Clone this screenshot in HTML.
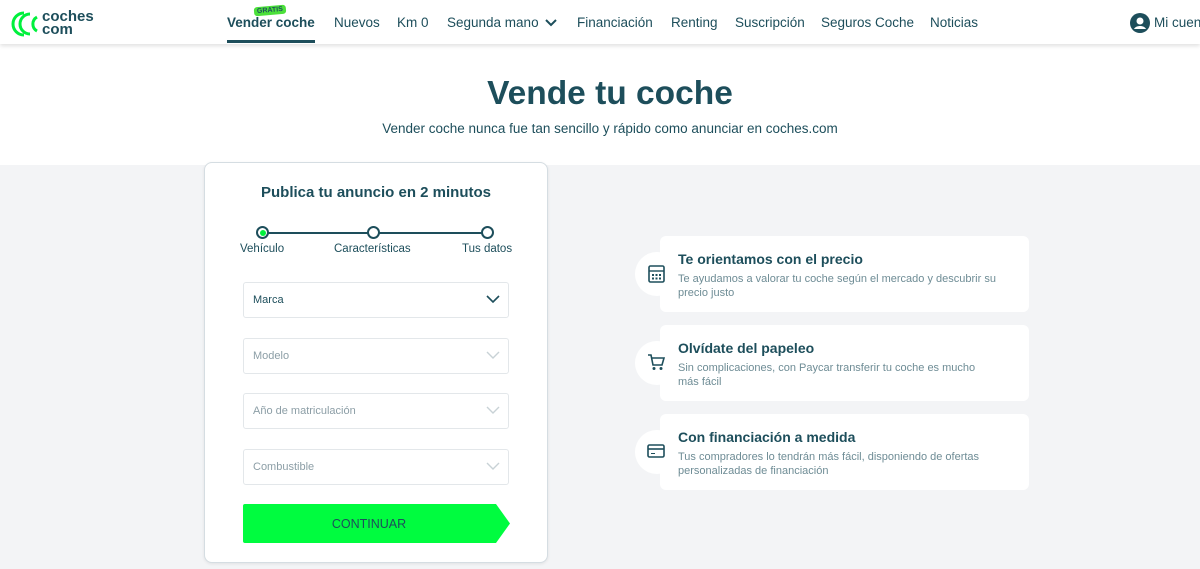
<!DOCTYPE html>
<html><head><meta charset="utf-8"><style>
*{margin:0;padding:0;box-sizing:border-box}
body{width:1200px;height:569px;overflow:hidden;font-family:"Liberation Sans",sans-serif;color:#1d4e5b;background:#f3f4f6;position:relative}
.hdr{position:absolute;left:0;top:0;width:1200px;height:44px;background:#fff;box-shadow:0 2px 4px rgba(0,0,0,.12);z-index:2}
.nav{position:absolute;top:15px;font-size:13.5px;color:#1d4e5b;white-space:nowrap}
.hero{position:absolute;left:0;top:44px;width:1200px;height:121px;background:#fff}
h1{position:absolute;top:75px;left:10px;width:1200px;text-align:center;font-size:33.5px;font-weight:bold;color:#1d4e5b}
.sub{position:absolute;top:121px;left:10px;width:1200px;text-align:center;font-size:13.5px;color:#1d4e5b}
.card{position:absolute;left:204px;top:162px;width:344px;height:401px;background:#fff;border:1px solid #d5dde2;border-radius:8px;box-shadow:0 1px 3px rgba(0,0,0,.08)}
.sel{position:absolute;left:38px;width:266px;height:36px;border:1px solid #e3e7ea;border-radius:3px;font-size:11px;padding:11px 9px;color:#8c9ea6}
.sel svg{position:absolute;right:8px;top:12px}
.f{position:absolute;left:660px;width:369px;height:76px;background:#fff;border-radius:6px}
.c{position:absolute;left:635px;width:44px;height:44px;border-radius:50%;background:#fff}
.f b{position:absolute;left:18px;top:15px;font-size:14px;color:#1d4e5b}
.f p{position:absolute;left:18px;top:36px;font-size:11px;color:#6e8c95;line-height:14px;width:320px}
</style></head><body>
<div class="hdr">
<svg style="position:absolute;left:10px;top:11px" width="30" height="26" viewBox="0 0 30 26"><path d="M14 2a11 11 0 1 0 0 22" fill="none" stroke="#00f03c" stroke-width="3"/><path d="M20 3a10 10 0 0 0 0 20" fill="none" stroke="#00f03c" stroke-width="3"/><path d="M27 6a8 8 0 0 0 0 14" fill="none" stroke="#00f03c" stroke-width="3"/></svg>
<div style="position:absolute;left:42px;top:10px;font-size:15px;font-weight:bold;line-height:13px;color:#1d4e5b">coches<br>com</div>
<div style="position:absolute;left:254px;top:6px;background:#4be03a;color:#1d4e5b;font-size:7px;font-weight:bold;padding:1px 3px;border-radius:3px;transform:rotate(-5deg)">GRATIS</div>
<div class="nav" style="left:227px;font-weight:bold">Vender coche</div>
<div style="position:absolute;left:227px;top:40px;width:88px;height:3px;background:#1d4e5b"></div>
<div class="nav" style="left:334px">Nuevos</div>
<div class="nav" style="left:397px">Km 0</div>
<div class="nav" style="left:447px">Segunda mano <svg width="12" height="8" viewBox="0 0 12 8" style="margin-left:3px"><path d="M1 1l5 5 5-5" fill="none" stroke="#1d4e5b" stroke-width="2"/></svg></div>
<div class="nav" style="left:577px">Financiación</div>
<div class="nav" style="left:671px">Renting</div>
<div class="nav" style="left:735px">Suscripción</div>
<div class="nav" style="left:821px">Seguros Coche</div>
<div class="nav" style="left:930px">Noticias</div>
<svg style="position:absolute;left:1130px;top:13px" width="20" height="20" viewBox="0 0 20 20"><circle cx="10" cy="10" r="10" fill="#1d4e5b"/><circle cx="10" cy="8" r="3.5" fill="#fff"/><path d="M4 16c2-4 10-4 12 0" fill="#fff"/></svg>
<div class="nav" style="left:1154px">Mi cuenta</div>
</div>
<div class="hero"></div>
<h1>Vende tu coche</h1>
<div class="sub">Vender coche nunca fue tan sencillo y rápido como anunciar en coches.com</div>
<div class="card">
<div style="position:absolute;top:21px;width:100%;text-align:center;font-size:15px;font-weight:bold">Publica tu anuncio en 2 minutos</div>
<div style="position:absolute;left:57px;top:69px;width:226px;height:2px;background:#1d4e5b"></div>
<div style="position:absolute;left:51px;top:63px;width:13px;height:13px;border-radius:50%;border:2px solid #1d4e5b;background:#fff"><div style="margin:1.5px;width:6px;height:6px;border-radius:50%;background:#00f03c"></div></div>
<div style="position:absolute;left:162px;top:63px;width:13px;height:13px;border-radius:50%;border:2px solid #1d4e5b;background:#fff"></div>
<div style="position:absolute;left:276px;top:63px;width:13px;height:13px;border-radius:50%;border:2px solid #1d4e5b;background:#fff"></div>
<div style="position:absolute;left:35px;top:80px;font-size:11.5px">Vehículo</div>
<div style="position:absolute;left:129px;top:80px;font-size:11.5px">Características</div>
<div style="position:absolute;left:257px;top:80px;font-size:11.5px">Tus datos</div>
<div class="sel" style="top:119px;color:#1d4e5b">Marca<svg width="14" height="9" viewBox="0 0 14 9"><path d="M1 1l6 6 6-6" fill="none" stroke="#1d4e5b" stroke-width="1.6"/></svg></div>
<div class="sel" style="top:175px">Modelo<svg width="14" height="9" viewBox="0 0 14 9"><path d="M1 1l6 6 6-6" fill="none" stroke="#c8d2d6" stroke-width="1.4"/></svg></div>
<div class="sel" style="top:230px">Año de matriculación<svg width="14" height="9" viewBox="0 0 14 9"><path d="M1 1l6 6 6-6" fill="none" stroke="#c8d2d6" stroke-width="1.4"/></svg></div>
<div class="sel" style="top:286px">Combustible<svg width="14" height="9" viewBox="0 0 14 9"><path d="M1 1l6 6 6-6" fill="none" stroke="#c8d2d6" stroke-width="1.4"/></svg></div>
<svg style="position:absolute;left:38px;top:341px" width="267" height="39" viewBox="0 0 267 39"><path d="M2 0H253L267 19.5L253 39H2Q0 39 0 37V2Q0 0 2 0Z" fill="#00fc3f"/><text x="126" y="24" text-anchor="middle" font-family="Liberation Sans" font-size="12.5" fill="#1d4e5b">CONTINUAR</text></svg>
</div>
<div class="c" style="top:252px"></div>
<div class="f" style="top:236px"><b>Te orientamos con el precio</b><p>Te ayudamos a valorar tu coche según el mercado y descubrir su precio justo</p></div>
<svg style="position:absolute;left:648px;top:265px" width="17" height="18" viewBox="0 0 17 18"><rect x="1" y="1" width="15" height="16" rx="1.5" fill="none" stroke="#1d4e5b" stroke-width="1.6"/><line x1="1" y1="6" x2="16" y2="6" stroke="#1d4e5b" stroke-width="1.4"/><rect x="4" y="9" width="2" height="2" fill="#1d4e5b"/><rect x="7.5" y="9" width="2" height="2" fill="#1d4e5b"/><rect x="11" y="9" width="2" height="2" fill="#1d4e5b"/><rect x="4" y="12.5" width="2" height="2" fill="#1d4e5b"/><rect x="7.5" y="12.5" width="2" height="2" fill="#1d4e5b"/><rect x="11" y="12.5" width="2" height="2" fill="#1d4e5b"/></svg>
<div class="c" style="top:341px"></div>
<div class="f" style="top:325px"><b>Olvídate del papeleo</b><p>Sin complicaciones, con Paycar transferir tu coche es mucho más fácil</p></div>
<svg style="position:absolute;left:647px;top:354px" width="18" height="17" viewBox="0 0 18 17"><path d="M1 1h3l2 10h9l2-7H5" fill="none" stroke="#1d4e5b" stroke-width="1.6"/><circle cx="7" cy="14.5" r="1.5" fill="#1d4e5b"/><circle cx="14" cy="14.5" r="1.5" fill="#1d4e5b"/></svg>
<div class="c" style="top:430px"></div>
<div class="f" style="top:414px"><b>Con financiación a medida</b><p>Tus compradores lo tendrán más fácil, disponiendo de ofertas personalizadas de financiación</p></div>
<svg style="position:absolute;left:647px;top:444px" width="18" height="14" viewBox="0 0 18 14"><rect x="1" y="1" width="16" height="12" rx="1.5" fill="none" stroke="#1d4e5b" stroke-width="1.6"/><line x1="1" y1="5" x2="17" y2="5" stroke="#1d4e5b" stroke-width="1.6"/><line x1="4" y1="9.5" x2="8" y2="9.5" stroke="#1d4e5b" stroke-width="1"/></svg>
</body></html>
